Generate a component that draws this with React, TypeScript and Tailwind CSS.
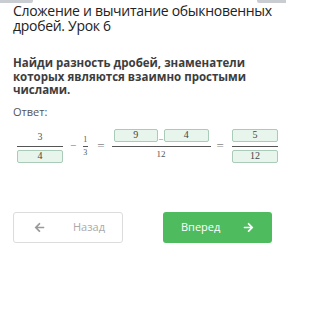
import { FaArrowLeft, FaArrowRight } from "react-icons/fa";

const serif = { fontFamily: '"Liberation Serif", "DejaVu Serif", serif' };

const Box = ({ value, className = "" }: { value: string; className?: string }) => (
  <div
    className={`h-[13px] flex items-center justify-center rounded-[2px] border border-[#a9cbb7] bg-[#e7f5ed] text-[10px] leading-none text-[#444] ${className}`}
    style={serif}
  >
    {value}
  </div>
);

const Fraction = ({
  top,
  bottom,
  width,
}: {
  top: React.ReactNode;
  bottom: React.ReactNode;
  width: string;
}) => (
  <div className={`flex flex-col items-center ${width}`}>
    <div className="h-[19px] w-full flex items-end justify-center pb-[4px]">{top}</div>
    <div className="h-px w-full bg-[#555]" />
    <div className="h-[18px] w-full flex items-start justify-center pt-[3px]">{bottom}</div>
  </div>
);

export default function App() {
  return (
    <div className="w-[286px] h-[320px] bg-white overflow-hidden" style={{ fontFamily: '"Open Sans", "Noto Sans", sans-serif' }}>
      {/* cut-off header pieces */}
      <div className="flex justify-between h-[3px]">
        <div className="w-[33px] bg-[#c9cdd1] rounded-br-[2px]" />
        <div className="w-[29px] bg-[#c9cdd1] rounded-bl-[2px]" />
      </div>

      <h1 className="pl-[13px] pr-[4px] text-[14px] leading-[15px] tracking-[-0.3px] text-[#222] font-normal">
        Сложение и вычитание обыкновенных дробей. Урок 6
      </h1>

      <p className="mt-[23px] px-[13px] text-[11.5px] leading-[13.5px] font-bold text-[#3d3d3d]">
        Найди разность дробей, знаменатели которых являются взаимно простыми числами.
      </p>

      <p className="mt-[8px] px-[13px] text-[11px] leading-[13px] text-[#555]">Ответ:</p>

      <div className="mt-[9px] flex items-start pl-[17px] text-[#555]" style={serif}>
        <Fraction
          width="w-[46px]"
          top={<span className="text-[10px] leading-none">3</span>}
          bottom={<Box value="4" className="w-full" />}
        />
        <div className="h-[38px] ml-[7px] flex items-center text-[11px] text-[#777]">−</div>
        <div className="ml-[6px] flex flex-col items-center w-[6px]">
          <div className="h-[19px] flex items-end pb-[2px] text-[8px] leading-none">1</div>
          <div className="h-px w-[5px] bg-[#555]" />
          <div className="pt-[2px] text-[8px] leading-none">3</div>
        </div>
        <div className="h-[38px] ml-[9px] flex items-center text-[13px] text-[#888]">=</div>
        <Fraction
          width="w-[99px] ml-[7px]"
          top={
            <div className="w-full flex items-end px-[2px]">
              <Box value="9" className="w-[45px]" />
              <span className="w-[6px] text-center text-[8px] leading-[6px] text-[#666]">–</span>
              <Box value="4" className="w-[45px]" />
            </div>
          }
          bottom={<span className="text-[9px] leading-none">12</span>}
        />
        <div className="h-[38px] ml-[6px] flex items-center text-[13px] text-[#888]">=</div>
        <Fraction
          width="w-[46px] ml-[8px]"
          top={<Box value="5" className="w-full" />}
          bottom={<Box value="12" className="w-full" />}
        />
      </div>

      <div className="mt-[47px] flex justify-between pl-[13px] pr-[14px]">
        <button className="w-[110px] h-[31px] flex items-center rounded-[3px] border border-[#dcdcdc] bg-white">
          <FaArrowLeft className="ml-[20px] text-[11px] text-[#9a9a9a]" />
          <span className="ml-[28px] text-[11px] text-[#aaa]">Назад</span>
        </button>
        <button className="w-[109px] h-[31px] flex items-center rounded-[3px] bg-[#4dbb5e]">
          <span className="ml-[18px] text-[11px] text-white">Вперед</span>
          <FaArrowRight className="ml-auto mr-[18px] text-[11px] text-white" />
        </button>
      </div>
    </div>
  );
}
